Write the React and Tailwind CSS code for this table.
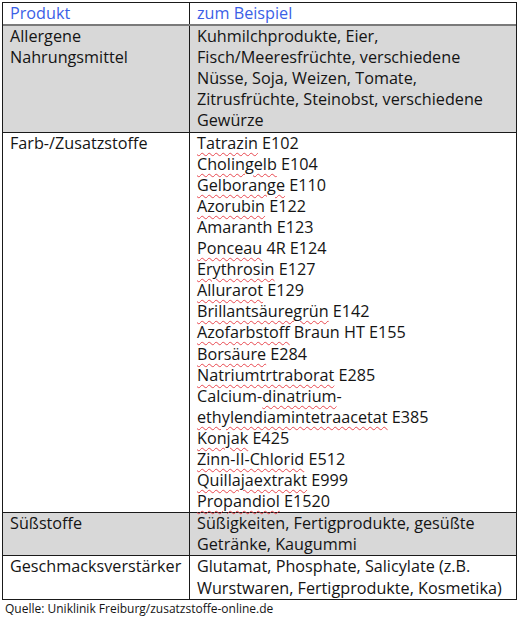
import React from "react";

const W = ({ children }) => (
  <span className="underline decoration-wavy decoration-[#e8484f] decoration-1 underline-offset-[3px]">{children}</span>
);

const farb = [
  [<W key="a">Tatrazin</W>, " E102"],
  [<W key="a">Cholingelb</W>, " E104"],
  [<W key="a">Gelborange</W>, " E110"],
  [<W key="a">Azorubin</W>, " E122"],
  ["Amaranth E123"],
  [<W key="a">Ponceau</W>, " 4R E124"],
  [<W key="a">Erythrosin</W>, " E127"],
  [<W key="a">Allurarot</W>, " E129"],
  [<W key="a">Brillantsäuregrün</W>, " E142"],
  [<W key="a">Azofarbstoff</W>, " Braun HT E155"],
  [<W key="a">Borsäure</W>, " E284"],
  [<W key="a">Natriumtrtraborat</W>, " E285"],
  ["Calcium-", <W key="a">dinatrium</W>, "-"],
  [<W key="a">ethylendiamintetraacetat</W>, " E385"],
  [<W key="a">Konjak</W>, " E425"],
  [<W key="a">Zinn-II-Chlorid</W>, " E512"],
  [<W key="a">Quillajaextrakt</W>, " E999"],
  [<W key="a">Propandiol</W>, " E1520"],
];

function Row({ left, children, gray, last, header }) {
  return (
    <div
      className={`flex ${gray ? "bg-[#d8d8d8]" : "bg-white"} ${
        header ? "border-b-2 border-[#7a7a7a]" : last ? "" : "border-b border-[#1a1a1a]"
      }`}
    >
      <div className="w-[187px] shrink-0 border-r border-[#1a1a1a] pl-[7px]">{left}</div>
      <div className="flex-1 pl-[7px]">{children}</div>
    </div>
  );
}

export default function App() {
  return (
    <div
      className="w-[521px] h-[620px] bg-white text-[#141414] text-[16.2px] leading-[21.1px]"
      style={{ fontFamily: '"Open Sans", "Liberation Sans", sans-serif' }}
    >
      <div className="pt-[2px] pl-[2px]">
        <div className="w-[515px] border border-[#1a1a1a]">
          <Row header left={<span className="text-[#3b5fe6]">Produkt</span>}>
            <span className="text-[#3b5fe6]">zum Beispiel</span>
          </Row>
          <Row gray left={<>Allergene<br />Nahrungsmittel</>}>
            Kuhmilchprodukte, Eier,
            <br />
            Fisch/Meeresfrüchte, verschiedene
            <br />
            Nüsse, Soja, Weizen, Tomate,
            <br />
            Zitrusfrüchte, Steinobst, verschiedene
            <br />
            Gewürze
          </Row>
          <Row left="Farb-/Zusatzstoffe">
            {farb.map((l, i) => (
              <div key={i}>{l}</div>
            ))}
          </Row>
          <Row gray left="Süßstoffe">
            Süßigkeiten, Fertigprodukte, gesüßte
            <br />
            Getränke, Kaugummi
          </Row>
          <Row last left="Geschmacksverstärker">
            Glutamat, Phosphate, Salicylate (z.B.
            <br />
            Wurstwaren, Fertigprodukte, Kosmetika)
          </Row>
        </div>
      </div>
      <div className="pl-[5px] pt-[1px] text-[12px] leading-[15px]">
        Quelle: Uniklinik Freiburg/zusatzstoffe-online.de
      </div>
    </div>
  );
}
